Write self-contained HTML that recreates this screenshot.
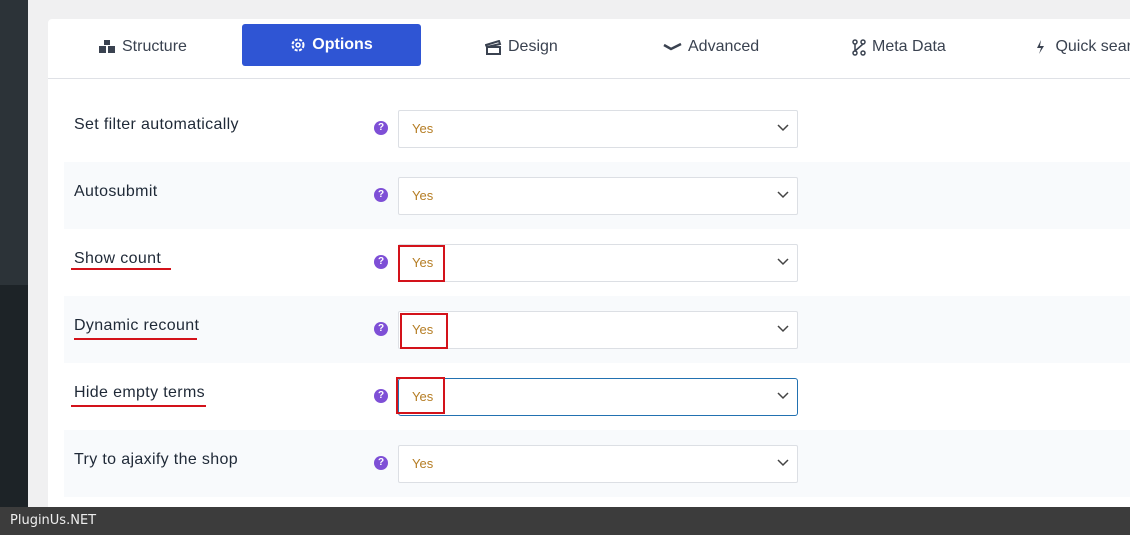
<!DOCTYPE html>
<html><head><style>
body{margin:0;width:1130px;height:535px;overflow:hidden;background:#f0f0f1;font-family:"Liberation Sans",sans-serif;position:relative}
.side{position:absolute;left:0;top:0;width:28px;height:285px;background:#2c3338}
.side2{position:absolute;left:0;top:285px;width:28px;height:250px;background:#1d2327}
.panel{position:absolute;left:48px;top:19px;width:1090px;height:500px;background:#fff;border-radius:4px}
.tabs{position:absolute;left:0;top:0;right:0;height:59px;border-bottom:1px solid #dfe1e6}
.tab{position:absolute;top:5px;height:42px;line-height:42px;font-size:16px;color:#3a4250;display:flex;align-items:center;gap:6px;white-space:nowrap;padding-top:2px}
.tab.act{background:#2f55d4;color:#fff;border-radius:3px;left:194px;width:179px;justify-content:center;padding-top:0}
.row{position:absolute;left:16px;width:1080px;height:67px}
.row.s{background:#f8fafc}
.lbl{position:absolute;left:10px;top:21px;font-size:16px;letter-spacing:0.35px;color:#1f2937}
.q{position:absolute;left:310px;top:26px;width:14px;height:14px;border-radius:50%;background:#7e4fd6;color:#fff;font-size:10px;font-weight:bold;text-align:center;line-height:14px}
.sel{position:absolute;left:334px;top:15px;width:398px;height:36px;border:1px solid #dcdfe4;border-radius:2px;background:#fff}
.sel span{position:absolute;left:13px;top:10px;font-size:13px;color:#b57d24}
.sel svg{position:absolute;right:8px;top:13px}
.box{position:absolute;border:2px solid #d3121a}
.ul{position:absolute;height:2px;background:#d3121a}
.foot{position:absolute;left:0;top:507px;width:1130px;height:28px;background:#3c3c3c;color:#eee;font-size:13px;line-height:28px;padding-left:10px;box-sizing:border-box;font-family:"DejaVu Sans",sans-serif}
</style></head><body>
<div class="side"></div><div class="side2"></div>
<div class="panel">
<div class="tabs">
<div class="tab" style="left:50px"><svg width="18" height="16" viewBox="0 0 18 16"><path d="M6 1h6v5H6zM1 7h7v7H1zM10 7h7v7h-7z" fill="#3a4250"/></svg>Structure</div>
<div class="tab act"><svg width="16" height="16" viewBox="0 0 16 16"><circle cx="8" cy="8" r="5.5" fill="none" stroke="#fff" stroke-width="2" stroke-dasharray="3 1.5"/><circle cx="8" cy="8" r="2" fill="none" stroke="#fff" stroke-width="1.5"/></svg><b style="font-weight:600">Options</b></div>
<div class="tab" style="left:437px"><svg width="17" height="15" viewBox="0 0 17 15"><path d="M1 5l13-4 1 3-13 3zM2 7h13v7H2z" fill="none" stroke="#3a4250" stroke-width="2"/></svg>Design</div>
<div class="tab" style="left:615px"><svg width="19" height="10" viewBox="0 0 19 10"><path d="M1 3l7 4 10-5" fill="none" stroke="#3a4250" stroke-width="2.5"/></svg>Advanced</div>
<div class="tab" style="left:804px"><svg width="14" height="17" viewBox="0 0 14 17"><circle cx="3" cy="3" r="2" fill="none" stroke="#3a4250" stroke-width="1.5"/><circle cx="11" cy="3" r="2" fill="none" stroke="#3a4250" stroke-width="1.5"/><circle cx="3" cy="14" r="2" fill="none" stroke="#3a4250" stroke-width="1.5"/><circle cx="11" cy="14" r="2" fill="none" stroke="#3a4250" stroke-width="1.5"/><path d="M3 5v7M11 5l-8 7" stroke="#3a4250" stroke-width="1.5"/></svg>Meta Data</div>
<div class="tab" style="left:987px"><svg width="10" height="16" viewBox="0 0 10 16"><path d="M6 1L2 9h4l-2 6 5-8H5z" fill="#3a4250"/></svg>&nbsp;Quick search</div>
</div>
</div>
<div style="position:absolute;left:48px;top:19px;width:1082px;height:500px">
<div class="row" style="top:76px"><div class="lbl">Set filter automatically</div><div class="q">?</div><div class="sel"><span>Yes</span><svg width="12" height="8"><path d="M1 1l5 5 5-5" fill="none" stroke="#444" stroke-width="1.5"/></svg></div></div>
<div class="row s" style="top:143px"><div class="lbl">Autosubmit</div><div class="q">?</div><div class="sel"><span>Yes</span><svg width="12" height="8"><path d="M1 1l5 5 5-5" fill="none" stroke="#444" stroke-width="1.5"/></svg></div></div>
<div class="row" style="top:210px"><div class="lbl">Show count</div><div class="q">?</div><div class="sel"><span>Yes</span><svg width="12" height="8"><path d="M1 1l5 5 5-5" fill="none" stroke="#444" stroke-width="1.5"/></svg></div></div>
<div class="row s" style="top:277px"><div class="lbl">Dynamic recount</div><div class="q">?</div><div class="sel"><span>Yes</span><svg width="12" height="8"><path d="M1 1l5 5 5-5" fill="none" stroke="#444" stroke-width="1.5"/></svg></div></div>
<div class="row" style="top:344px"><div class="lbl">Hide empty terms</div><div class="q">?</div><div class="sel" style="border:1.5px solid #2271b1;border-radius:3px"><span>Yes</span><svg width="12" height="8"><path d="M1 1l5 5 5-5" fill="none" stroke="#444" stroke-width="1.5"/></svg></div></div>
<div class="row s" style="top:411px"><div class="lbl">Try to ajaxify the shop</div><div class="q">?</div><div class="sel"><span>Yes</span><svg width="12" height="8"><path d="M1 1l5 5 5-5" fill="none" stroke="#444" stroke-width="1.5"/></svg></div></div>
</div>
<div class="ul" style="left:71px;top:268px;width:100px"></div>
<div class="ul" style="left:74px;top:338px;width:123px"></div>
<div class="ul" style="left:71px;top:405px;width:135px"></div>
<div class="box" style="left:398px;top:245px;width:43px;height:33px"></div>
<div class="box" style="left:400px;top:313px;width:44px;height:32px"></div>
<div class="box" style="left:396px;top:377px;width:45px;height:33px"></div>
<div class="foot">PluginUs.NET</div>
</body></html>
